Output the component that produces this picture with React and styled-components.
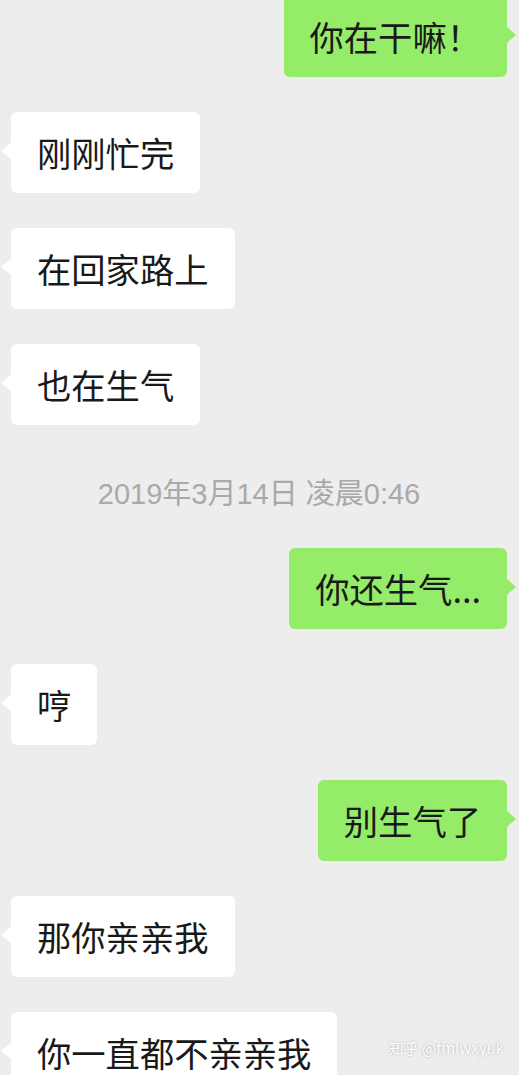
import React from "react";
import styled, { createGlobalStyle, css } from "styled-components";

const GlobalStyle = createGlobalStyle`
  html, body {
    margin: 0;
    padding: 0;
    background: #ededed;
    overflow: hidden;
  }
`;

const Page = styled.div`
  position: relative;
  width: 519px;
  height: 1075px;
  overflow: hidden;
  background: #ededed;
  font-family: "Noto Sans CJK SC", "Noto Sans", sans-serif;
`;

const Thread = styled.div`
  display: flex;
  flex-direction: column;
  gap: 35px;
  margin-top: -4px;
  padding: 0 12px 0 11px;
`;

const Bubble = styled.div`
  position: relative;
  align-self: ${(p) => (p.$mine ? "flex-end" : "flex-start")};
  padding: 23px 26px 23px 26px;
  border-radius: 6px;
  font-size: 34.3px;
  line-height: 35px;
  color: #191919;
  white-space: nowrap;
  background: ${(p) => (p.$mine ? "#95ec69" : "#ffffff")};

  &::before {
    content: "";
    position: absolute;
    top: 31px;
    border-top: 8.5px solid transparent;
    border-bottom: 8.5px solid transparent;
    ${(p) =>
      p.$mine
        ? css`
            right: -9px;
            border-left: 9px solid #95ec69;
          `
        : css`
            left: -10px;
            border-right: 10px solid #ffffff;
          `}
  }
`;

const Time = styled.div`
  padding: 19px 0 4px;
  text-align: center;
  font-size: 29px;
  line-height: 30px;
  color: #a9a9a9;
  font-family: "Liberation Sans", "Noto Sans CJK SC", sans-serif;
`;

const Watermark = styled.div`
  position: absolute;
  right: 15px;
  bottom: 18px;
  font-size: 15px;
  line-height: 18px;
  color: #ffffff;
  text-shadow: 0 0 2px rgba(120, 120, 120, 0.6);
  font-family: "Noto Sans CJK SC", "Noto Sans", sans-serif;
`;

const messages = [
  { mine: true, text: "你在干嘛！" },
  { text: "刚刚忙完" },
  { text: "在回家路上" },
  { text: "也在生气" },
  { time: "2019年3月14日 凌晨0:46" },
  { mine: true, text: "你还生气..." },
  { text: "哼" },
  { mine: true, text: "别生气了" },
  { text: "那你亲亲我" },
  { text: "你一直都不亲亲我" },
];

const App = () => {
  return (
    <Page>
      <GlobalStyle />
      <Thread>
        {messages.map((m, i) =>
          m.time ? (
            <Time key={i}>{m.time}</Time>
          ) : (
            <Bubble key={i} $mine={m.mine}>
              {m.text}
            </Bubble>
          )
        )}
      </Thread>
      <Watermark>知乎 @fmlwxyuk</Watermark>
    </Page>
  );
};

export default App;
